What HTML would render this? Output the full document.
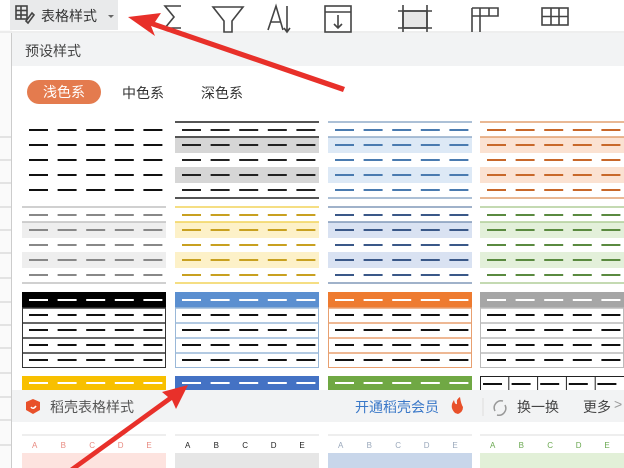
<!DOCTYPE html>
<html><head><meta charset="utf-8"><style>
body{margin:0;width:624px;height:468px;overflow:hidden;background:#fff;position:relative;font-family:"Liberation Sans","Noto Sans CJK SC",sans-serif;}
.abs{position:absolute}
</style></head><body>
<svg id="s" class="abs" style="left:0;top:0" width="624" height="468" xmlns="http://www.w3.org/2000/svg"></svg>
<div class="abs" style="left:41px;top:6px;font-size:14px;color:#333">表格样式</div>
<div class="abs" style="left:25px;top:41px;font-size:14px;color:#444">预设样式</div>
<div class="abs" style="left:27px;top:80px;width:74px;height:24px;border-radius:12px;background:#e47b4e;color:#fff;font-size:14px;line-height:24px;text-align:center">浅色系</div>
<div class="abs" style="left:122px;top:83px;font-size:14px;color:#333">中色系</div>
<div class="abs" style="left:201px;top:83px;font-size:14px;color:#333">深色系</div>
<div class="abs" style="left:50px;top:397px;font-size:14px;color:#555">稻壳表格样式</div>
<div class="abs" style="left:355px;top:397px;font-size:14px;color:#3a78c8">开通稻壳会员</div>
<div class="abs" style="left:517px;top:397px;font-size:14px;color:#444">换一换</div>
<div class="abs" style="left:583px;top:397px;font-size:14px;color:#444">更多</div>
<div class="abs" style="left:614px;top:396px;font-size:14px;color:#999">&gt;</div>
<script>
var s=document.getElementById('s'),h='';
function R(x,y,w,hh,f,st){h+='<rect x="'+x+'" y="'+y+'" width="'+w+'" height="'+hh+'" fill="'+f+'"'+(st?' stroke="'+st+'"':'')+'/>';}
function L(x1,y1,x2,y2,c,w){h+='<line x1="'+x1+'" y1="'+y1+'" x2="'+x2+'" y2="'+y2+'" stroke="'+c+'" stroke-width="'+(w||1)+'"/>';}
function T(x,y,t,c,fs){h+='<text x="'+x+'" y="'+y+'" fill="'+c+'" font-size="'+(fs||9)+'" font-family="Liberation Sans">'+t+'</text>';}
R(0,30,12,438,'#fafafa');
[137,160,183,207,230,253,278,302,325,348,373,397,420,445].forEach(function(y){L(0,y,12,y,'#ccc');});
R(10,0,108,30,'#e9eaeb');
L(0,32,624,32,'#ddd');
R(12,33,612,435,'#fff');L(11.5,33,11.5,468,'#ccc');
R(12,33,612,33,'#f2f3f4');
h+='<g fill="none" stroke="#444" stroke-width="1.6">';
h+='<rect x="16" y="6" width="11" height="13"/><line x1="16" y1="10.5" x2="27" y2="10.5"/><line x1="16" y1="15" x2="27" y2="15"/><line x1="21" y1="6" x2="21" y2="19"/><path d="M26 21 L32 13 L34 15 L28 23 Z"/>';
h+='<path d="M181 6 H165 L174 17 L165 28 H181"/>';
h+='<path d="M213 7 H243 L232 21 V32 H224 V21 Z"/>';
h+='<path d="M268 30 L276 6 L283 30 M271 22 H281 M287 6 V32 M284 28 L287 32 L290 28"/>';
h+='<rect x="325" y="6" width="26" height="26"/><line x1="325" y1="12" x2="351" y2="12"/><path d="M338 15 V28 M334 24 L338 28 L342 24"/>';
h+='<rect x="403" y="11" width="24" height="17" fill="#e6e6e6"/><path d="M398 11 H432 M398 28 H432 M403 5 V32 M427 5 V32"/>';
h+='<path d="M472 8 H498 V16 H472 M472 8 V32 M480 8 V32 M489 8 V16"/>';
h+='<rect x="542" y="8" width="26" height="17"/><path d="M542 16.5 H568 M551 8 V25 M559 8 V25"/></g>';
h+='<path d="M108 15 L114 15 L111 18 Z" fill="#666"/>';
var cols=[22,175,328,480],W=144;
function dashes(x,y,c,w){for(var i=0;i<5;i++){L(x+7+i*28.6,y,x+26+i*28.6,y,c,w||2);}}
function striped(x,top,line,band,dash,lw){R(x,top+15,W,16,band);R(x,top+45,W,16,band);
 if(line){L(x,top,x+W,top,line,lw);L(x,top+15,x+W,top+15,line,lw);L(x,top+76,x+W,top+76,line,lw);}
 for(var r=0;r<5;r++)dashes(x,top+8+r*15,dash);}
for(var r=0;r<5;r++)dashes(22,130+r*15,'#111');
striped(175,122,'#555','#d6d6d6','#222',2);
striped(328,122,'#90abc8','#dde9f6','#4a7bb0',1.6);
striped(480,122,'#e2a070','#fbe2d2','#c8682a',1.6);
striped(22,207,'#c0c0c0','#eeeeee','#888',1.6);
striped(175,207,'#f2d45a','#fdf1c8','#c8a020',1.6);
striped(328,207,'#8098b8','#d9e2f2','#3a5888',1.6);
striped(480,207,'#b0cd98','#e3f0da','#5a8a40',1.6);
function boxed(x,hd,bd){R(x+.5,292.5,W-1,75,'#fff',bd);R(x,292,W,16,hd);
 for(var k=1;k<5;k++)L(x,308+(k-1)*15,x+W,308+(k-1)*15,bd,1.5);
 dashes(x,300,'#fff');for(var r=1;r<5;r++)dashes(x,300+r*15,'#111');}
boxed(22,'#000','#333');boxed(175,'#5b8fd0','#9ab8d8');boxed(328,'#ee7b30','#e8a070');boxed(480,'#a6a6a6','#bbb');
[['#f8c000',22],['#4472c4',175],['#70a844',328]].forEach(function(a){R(a[1],376,W,14,a[0]);dashes(a[1],383,'#fff');});
R(480.5,376.5,W,20,'#fff','#222');for(var i=1;i<5;i++)L(480+i*28.8,376,480+i*28.8,390,'#222');dashes(476,384,'#111');
R(12,390,612,32,'#f2f3f4');
h+='<path d="M33 399 L40 402 V410 L33 414 L26 410 V402 Z" fill="#e8502a"/><path d="M31 407 Q33 410 36 406" stroke="#fff" fill="none" stroke-width="1.5"/>';
h+='<path d="M455 413 Q449 407 454 400 Q455 405 457 404 Q456 399 460 397 Q461 404 463 407 Q463 412 458 414 Z" fill="#e8502a"/>';
L(483,398,483,416,'#ddd');
h+='<path d="M503 401 A7 7 0 0 0 495 411 M497 415 A7 7 0 0 0 505 405" stroke="#999" fill="none" stroke-width="1.5"/>';
var lc=[['#e88a80','#fde3df'],['#222','#e6e6e6'],['#9aa8bb','#c8d6ea'],['#6aa850','#e2f0d8']];
cols.forEach(function(x,i){L(x,435,x+W,435,'#ddd');['A','B','C','D','E'].forEach(function(t,j){T(x+10+j*28.6,448,t,lc[i][0],8);});R(x,453,W,15,lc[i][1]);});
h+='<path d="M343 92 L151 26 L155 36 L128 17 L161 13 L155 22 L345 87 Z" fill="#e8302a"/>';
h+='<path d="M78 468 L172 400 L176 409 L188 385 L162 392 L168 397 L70 468 Z" fill="#e8302a"/>';
s.innerHTML=h;
</script>
</body></html>
